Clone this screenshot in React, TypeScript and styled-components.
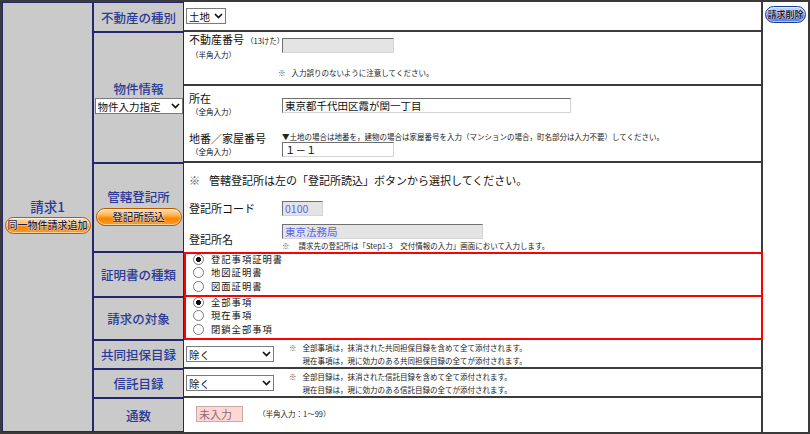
import React from "react";
import styled, { createGlobalStyle } from "styled-components";

const navy = "#26266e";
const ink = "#2b3a96";
const font = `"Noto Sans CJK JP", "Noto Sans", sans-serif`;

const GlobalStyle = createGlobalStyle`
  html, body {
    margin: 0;
    padding: 0;
    background: #fff;
  }
  body {
    font-family: ${font};
    color: #111;
  }
`;

const Dropdown = ({ w, options }: { w: number; options: string[] }) => (
  <SelectWrap>
    <Select $w={w} defaultValue={options[0]}>
      {options.map((o) => (
        <option key={o}>{o}</option>
      ))}
    </Select>
    <Chevron viewBox="0 0 9 6" aria-hidden>
      <path d="M1 1 L4.5 4.5 L8 1" />
    </Chevron>
  </SelectWrap>
);

const App = () => (
  <>
    <GlobalStyle />
    <Frame>
      <SideCell>
        <SideTitle>請求1</SideTitle>
        <PillButton $tone="orange" $w={86} $h={17} $size={10}>
          同一物件請求追加
        </PillButton>
      </SideCell>

      <Rows>
        <Row $h={30}>
          <Label>不動産の種別</Label>
          <Cell $pad="0 0 0 2px">
            <Dropdown w={40} options={["土地", "建物"]} />
          </Cell>
        </Row>

        <Row $h={131}>
          <Label $gap={2}>
            物件情報
            <Dropdown w={88} options={["物件入力指定"]} />
          </Label>
          <Cell $stack>
            <SubRow $h={54} $divided>
              <FieldName>
                不動産番号<Small>（13けた）</Small>
                <Hint>（半角入力）</Hint>
              </FieldName>
              <FieldBody>
                <TextBox $w={112} $variant="locked" $top={6} readOnly />
                <Note $top={15} $shift={-4}>
                  <Mark>※</Mark>入力誤りのないように注意してください。
                </Note>
              </FieldBody>
            </SubRow>
            <SubRow $h={40}>
              <FieldName $top={5}>
                所在
                <Hint>（全角入力）</Hint>
              </FieldName>
              <FieldBody>
                <TextBox
                  $w={289}
                  $top={12}
                  defaultValue="東京都千代田区霞が関一丁目"
                />
              </FieldBody>
            </SubRow>
            <SubRow $h={35}>
              <FieldName $top={5}>
                地番／家屋番号
                <Hint>（全角入力）</Hint>
              </FieldName>
              <FieldBody>
                <Note $top={6}>
                  ▼土地の場合は地番を，建物の場合は家屋番号を入力（マンションの場合，町名部分は入力不要）してください。
                </Note>
                <TextBox $w={112} $top={0} defaultValue="１－１" />
              </FieldBody>
            </SubRow>
          </Cell>
        </Row>

        <Row $h={89}>
          <Label $gap={4}>
            管轄登記所
            <PillButton $tone="orange" $w={86} $h={18} $size={10.5}>
              登記所読込
            </PillButton>
          </Label>
          <Cell $stack $open $pad="10px 0 0 0">
            <Notice>
              <Mark $gap={9}>※</Mark>
              管轄登記所は左の「登記所読込」ボタンから選択してください。
            </Notice>
            <FieldLine $h={24} $top={9}>
              <FieldName>登記所コード</FieldName>
              <FieldBody>
                <TextBox $w={41} $variant="locked" defaultValue="0100" readOnly />
              </FieldBody>
            </FieldLine>
            <FieldLine $h={30} $top={2}>
              <FieldName $top={4}>登記所名</FieldName>
              <FieldBody>
                <TextBox
                  $w={201}
                  $variant="locked"
                  defaultValue="東京法務局"
                  readOnly
                />
                <Note $top={2} $h={10}>
                  <Mark $gap={9}>※</Mark>
                  請求先の登記所は「Step1-3　交付情報の入力」画面において入力します。
                </Note>
              </FieldBody>
            </FieldLine>
          </Cell>
        </Row>

        <Row $h={45}>
          <Label>証明書の種類</Label>
          <Cell $alert="full">
            <RadioGroup>
              <RadioRow>
                <Radio type="radio" name="kind" defaultChecked />
                登記事項証明書
              </RadioRow>
              <RadioRow>
                <Radio type="radio" name="kind" />
                地図証明書
              </RadioRow>
              <RadioRow>
                <Radio type="radio" name="kind" />
                図面証明書
              </RadioRow>
            </RadioGroup>
          </Cell>
        </Row>

        <Row $h={43}>
          <Label>請求の対象</Label>
          <Cell $alert="below">
            <RadioGroup>
              <RadioRow>
                <Radio type="radio" name="scope" defaultChecked />
                全部事項
              </RadioRow>
              <RadioRow>
                <Radio type="radio" name="scope" />
                現在事項
              </RadioRow>
              <RadioRow>
                <Radio type="radio" name="scope" />
                閉鎖全部事項
              </RadioRow>
            </RadioGroup>
          </Cell>
        </Row>

        <Row $h={29}>
          <Label>共同担保目録</Label>
          <Cell $pad="0 0 0 2px" $gapX={15}>
            <Dropdown w={88} options={["除く", "含む"]} />
            <NoteBlock>
              <Mark>※</Mark>
              <div>
                全部事項は，抹消された共同担保目録を含めて全て添付されます。
                <br />
                現在事項は，現に効力のある共同担保目録の全てが添付されます。
              </div>
            </NoteBlock>
          </Cell>
        </Row>

        <Row $h={29}>
          <Label>信託目録</Label>
          <Cell $pad="0 0 0 2px" $gapX={15}>
            <Dropdown w={88} options={["除く", "含む"]} />
            <NoteBlock>
              <Mark>※</Mark>
              <div>
                全部目録は，抹消された信託目録を含めて全て添付されます。
                <br />
                現在目録は，現に効力のある信託目録の全てが添付されます。
              </div>
            </NoteBlock>
          </Cell>
        </Row>

        <Row $h={34}>
          <Label>通数</Label>
          <Cell $open $pad="0 0 2px 12px" $gapX={15}>
            <TextBox $w={47} $h={16} $variant="empty" placeholder="未入力" />
            <Note>（半角入力：1～99）</Note>
          </Cell>
        </Row>
      </Rows>

      <RightCol>
        <PillButton $tone="blue" $w={41} $h={17} $size={9} $bold>
          請求削除
        </PillButton>
      </RightCol>
    </Frame>
  </>
);

export default App;

const Frame = styled.div`
  width: 810px;
  height: 434px;
  box-sizing: border-box;
  border: 2px solid #3a3a3a;
  display: flex;
  font-family: ${font};
  background: #fff;
`;

const SideCell = styled.div`
  width: 91px;
  flex: none;
  box-sizing: border-box;
  background: #cacaca;
  border: 1px solid ${navy};
  display: flex;
  flex-direction: column;
  align-items: center;
  justify-content: center;
  gap: 3px;
  padding-bottom: 2px;
`;

const SideTitle = styled.div`
  color: ${ink};
  font-size: 13.5px;
  font-weight: 500;
  line-height: 15px;
`;

const PillButton = styled.button<{
  $tone: "orange" | "blue";
  $w: number;
  $h: number;
  $size?: number;
  $bold?: boolean;
}>`
  width: ${(p) => p.$w}px;
  height: ${(p) => p.$h}px;
  padding: 0;
  box-sizing: border-box;
  border-radius: 9px;
  font-family: ${font};
  font-size: ${(p) => p.$size ?? 10}px;
  font-weight: ${(p) => (p.$bold ? 700 : 500)};
  line-height: 1;
  color: #1c1c3c;
  cursor: pointer;
  white-space: nowrap;
  text-shadow: 0 0 2px #fff, 0 0 1px #fff;
  border: 1px solid ${(p) => (p.$tone === "orange" ? "#b85a00" : "#1b3a9a")};
  background: ${(p) =>
    p.$tone === "orange"
      ? "linear-gradient(#ffe2b8 0%, #ffb24a 40%, #f58500 60%, #f99a2a 100%)"
      : "linear-gradient(#cfe0ff 0%, #7ea6ff 40%, #3a68e8 60%, #5b86f2 100%)"};
  box-shadow: inset 0 0 0 1px rgba(255, 255, 255, 0.55);
`;

const Rows = styled.div`
  flex: 1;
  display: flex;
  flex-direction: column;
`;

const Row = styled.div<{ $h: number }>`
  display: flex;
  height: ${(p) => p.$h}px;
  flex: none;
`;

const Label = styled.div<{ $gap?: number }>`
  width: 91px;
  flex: none;
  box-sizing: border-box;
  background: #cacaca;
  border: 1px solid ${navy};
  color: ${ink};
  font-size: 12.5px;
  font-weight: 500;
  line-height: 15px;
  display: flex;
  flex-direction: column;
  align-items: center;
  justify-content: center;
  gap: ${(p) => p.$gap ?? 0}px;
  white-space: nowrap;
`;

const Cell = styled.div<{
  $alert?: "full" | "below";
  $stack?: boolean;
  $open?: boolean;
  $pad?: string;
  $gapX?: number;
}>`
  flex: 1;
  min-width: 0;
  box-sizing: border-box;
  display: flex;
  flex-direction: ${(p) => (p.$stack ? "column" : "row")};
  align-items: ${(p) => (p.$stack || p.$alert ? "stretch" : "center")};
  gap: ${(p) => p.$gapX ?? 0}px;
  padding: ${(p) => p.$pad ?? "0"};
  font-size: 11px;
  border-right: 2px solid ${(p) => (p.$alert ? "#ff0000" : "#3c3c3c")};
  border-bottom: ${(p) =>
    p.$alert ? "2px solid #ff0000" : p.$open ? "none" : "2px solid #3c3c3c"};
  border-top: ${(p) => (p.$alert === "full" ? "2px solid #ff0000" : "none")};
  border-left: ${(p) => (p.$alert ? "2px solid #ff0000" : "none")};
`;

const SubRow = styled.div<{ $h: number; $divided?: boolean }>`
  display: grid;
  grid-template-columns: 93px 1fr;
  height: ${(p) => p.$h}px;
  flex: none;
  box-sizing: border-box;
  padding-left: 5px;
  border-bottom: ${(p) => (p.$divided ? "2px solid #3c3c3c" : "none")};
`;

const FieldLine = styled.div<{ $h: number; $top: number }>`
  display: grid;
  grid-template-columns: 93px 1fr;
  align-items: center;
  height: ${(p) => p.$h}px;
  margin-top: ${(p) => p.$top}px;
  padding-left: 5px;
`;

const FieldName = styled.div<{ $top?: number }>`
  font-size: 11px;
  line-height: 14px;
  padding-top: ${(p) => p.$top ?? 0}px;
  white-space: nowrap;
`;

const Small = styled.span`
  font-size: 7.5px;
  margin-left: 2px;
`;

const Hint = styled.div`
  font-size: 7.5px;
  line-height: 10px;
  margin: 2px 0 0 2px;
`;

const FieldBody = styled.div`
  display: flex;
  flex-direction: column;
  align-items: flex-start;
`;

const TextBox = styled.input<{
  $w: number;
  $h?: number;
  $top?: number;
  $variant?: "plain" | "locked" | "empty";
}>`
  width: ${(p) => p.$w}px;
  height: ${(p) => p.$h ?? 15}px;
  margin: ${(p) => p.$top ?? 0}px 0 0 0;
  box-sizing: border-box;
  padding: 0 2px;
  font-family: ${font};
  font-size: ${(p) => (p.$variant === "empty" ? 11 : 10.5)}px;
  border: 1px solid;
  border-color: ${(p) =>
    p.$variant === "empty" ? "#c9a9a9" : "#6f6f6f #d4d4d4 #d4d4d4 #6f6f6f"};
  border-radius: 0;
  outline: none;
  color: ${(p) => (p.$variant === "locked" ? "#5a64ea" : "#111")};
  background: ${(p) =>
    p.$variant === "locked"
      ? "#e4e4e4 radial-gradient(#cfcfcf 0.6px, transparent 0.7px) 0 0 / 2px 2px"
      : p.$variant === "empty"
      ? "#ffd6d6"
      : "#fff"};
  &::placeholder {
    color: #8c6e6e;
  }
`;

const Note = styled.div<{ $top?: number; $shift?: number; $h?: number }>`
  font-size: 7.5px;
  line-height: ${(p) => p.$h ?? 10}px;
  margin: ${(p) => p.$top ?? 0}px 0 0 ${(p) => p.$shift ?? 0}px;
  color: #222;
  white-space: nowrap;
`;

const Mark = styled.span<{ $gap?: number }>`
  display: inline-block;
  margin-right: ${(p) => p.$gap ?? 6}px;
  color: #555;
`;

const Notice = styled.div`
  font-size: 11px;
  line-height: 14px;
  padding-left: 5px;
  white-space: nowrap;
`;

const NoteBlock = styled.div`
  display: flex;
  font-size: 7.5px;
  line-height: 13px;
  color: #222;
  white-space: nowrap;
`;

const RadioGroup = styled.div`
  display: flex;
  flex-direction: column;
  margin-top: -1.5px;
`;

const RadioRow = styled.label`
  display: flex;
  align-items: center;
  height: 13.5px;
  font-size: 9.3px;
  letter-spacing: 1px;
  line-height: 13px;
  white-space: nowrap;
`;

const Radio = styled.input`
  appearance: none;
  width: 11px;
  height: 11px;
  margin: 0 7px 0 7px;
  border: 1px solid #7a7a7a;
  border-radius: 50%;
  background: #fff;
  box-sizing: border-box;
  &:checked {
    background: radial-gradient(circle, #111 0 2.4px, #fff 2.8px);
  }
`;

const SelectWrap = styled.span`
  position: relative;
  display: inline-flex;
`;

const Select = styled.select<{ $w: number }>`
  appearance: none;
  width: ${(p) => p.$w}px;
  height: 16px;
  box-sizing: border-box;
  padding: 0 12px 0 2px;
  font-family: ${font};
  font-size: 10.5px;
  color: #111;
  background: #fff;
  border: 1px solid #7a7a7a;
  border-radius: 0;
`;

const Chevron = styled.svg`
  position: absolute;
  right: 3px;
  top: 50%;
  width: 9px;
  height: 6px;
  margin-top: -3px;
  pointer-events: none;
  fill: none;
  stroke: #111;
  stroke-width: 1.7;
`;

const RightCol = styled.div`
  width: 45px;
  flex: none;
  box-sizing: border-box;
  display: flex;
  justify-content: center;
  align-items: flex-start;
  padding-top: 4px;
`;
